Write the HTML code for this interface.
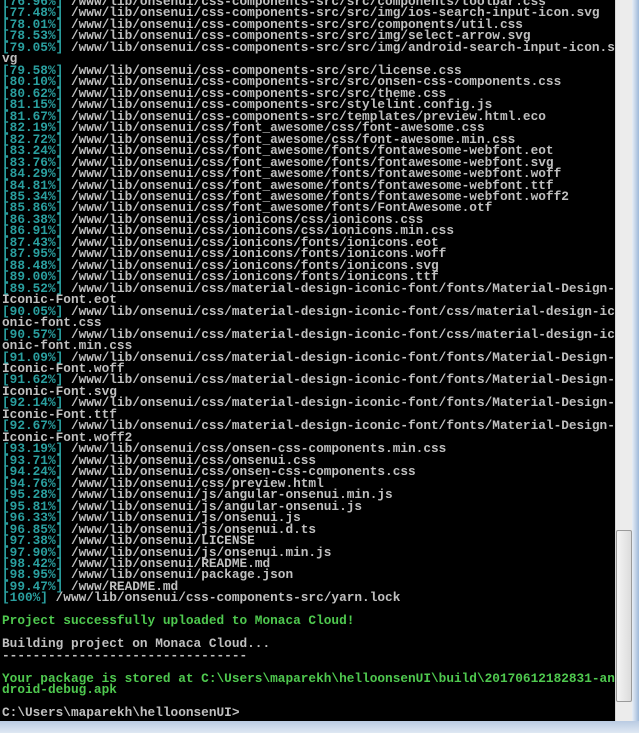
<!DOCTYPE html>
<html><head><meta charset="utf-8"><style>
html,body{margin:0;padding:0;width:639px;height:733px;overflow:hidden;background:#c9d7e8;}
#con{position:absolute;left:0;top:0;width:615px;height:721px;background:#000;overflow:hidden;}
pre{position:absolute;left:2px;top:-4px;margin:0;font-family:"Liberation Mono",monospace;font-size:12.78px;line-height:11.47px;color:#c0c0c0;font-weight:bold;white-space:pre;}
.c{color:#2a9f9f}.g{color:#4fc94f}
#sb{position:absolute;left:615px;top:0;width:17px;height:721px;background:#ececec;border-left:1px solid #d8d8d8;}
#th{position:absolute;left:616px;top:530px;width:14px;height:170px;background:linear-gradient(90deg,#f4f4f4,#dcdcdc);border:1px solid #9a9a9a;border-radius:2px;}
#fr{position:absolute;left:632px;top:0;width:7px;height:733px;background:linear-gradient(90deg,#e8eef6,#9fb9d9);}
#bt{position:absolute;left:0;top:721px;width:639px;height:12px;background:linear-gradient(#b9cbe2,#dfe8f3);}
</style></head><body>
<div id="con"><pre><span class="c">[76.96%]</span> /www/lib/onsenui/css-components-src/src/components/toolbar.css
<span class="c">[77.48%]</span> /www/lib/onsenui/css-components-src/src/img/ios-search-input-icon.svg
<span class="c">[78.01%]</span> /www/lib/onsenui/css-components-src/src/components/util.css
<span class="c">[78.53%]</span> /www/lib/onsenui/css-components-src/src/img/select-arrow.svg
<span class="c">[79.05%]</span> /www/lib/onsenui/css-components-src/src/img/android-search-input-icon.s
vg
<span class="c">[79.58%]</span> /www/lib/onsenui/css-components-src/src/license.css
<span class="c">[80.10%]</span> /www/lib/onsenui/css-components-src/src/onsen-css-components.css
<span class="c">[80.62%]</span> /www/lib/onsenui/css-components-src/src/theme.css
<span class="c">[81.15%]</span> /www/lib/onsenui/css-components-src/stylelint.config.js
<span class="c">[81.67%]</span> /www/lib/onsenui/css-components-src/templates/preview.html.eco
<span class="c">[82.19%]</span> /www/lib/onsenui/css/font_awesome/css/font-awesome.css
<span class="c">[82.72%]</span> /www/lib/onsenui/css/font_awesome/css/font-awesome.min.css
<span class="c">[83.24%]</span> /www/lib/onsenui/css/font_awesome/fonts/fontawesome-webfont.eot
<span class="c">[83.76%]</span> /www/lib/onsenui/css/font_awesome/fonts/fontawesome-webfont.svg
<span class="c">[84.29%]</span> /www/lib/onsenui/css/font_awesome/fonts/fontawesome-webfont.woff
<span class="c">[84.81%]</span> /www/lib/onsenui/css/font_awesome/fonts/fontawesome-webfont.ttf
<span class="c">[85.34%]</span> /www/lib/onsenui/css/font_awesome/fonts/fontawesome-webfont.woff2
<span class="c">[85.86%]</span> /www/lib/onsenui/css/font_awesome/fonts/FontAwesome.otf
<span class="c">[86.38%]</span> /www/lib/onsenui/css/ionicons/css/ionicons.css
<span class="c">[86.91%]</span> /www/lib/onsenui/css/ionicons/css/ionicons.min.css
<span class="c">[87.43%]</span> /www/lib/onsenui/css/ionicons/fonts/ionicons.eot
<span class="c">[87.95%]</span> /www/lib/onsenui/css/ionicons/fonts/ionicons.woff
<span class="c">[88.48%]</span> /www/lib/onsenui/css/ionicons/fonts/ionicons.svg
<span class="c">[89.00%]</span> /www/lib/onsenui/css/ionicons/fonts/ionicons.ttf
<span class="c">[89.52%]</span> /www/lib/onsenui/css/material-design-iconic-font/fonts/Material-Design-
Iconic-Font.eot
<span class="c">[90.05%]</span> /www/lib/onsenui/css/material-design-iconic-font/css/material-design-ic
onic-font.css
<span class="c">[90.57%]</span> /www/lib/onsenui/css/material-design-iconic-font/css/material-design-ic
onic-font.min.css
<span class="c">[91.09%]</span> /www/lib/onsenui/css/material-design-iconic-font/fonts/Material-Design-
Iconic-Font.woff
<span class="c">[91.62%]</span> /www/lib/onsenui/css/material-design-iconic-font/fonts/Material-Design-
Iconic-Font.svg
<span class="c">[92.14%]</span> /www/lib/onsenui/css/material-design-iconic-font/fonts/Material-Design-
Iconic-Font.ttf
<span class="c">[92.67%]</span> /www/lib/onsenui/css/material-design-iconic-font/fonts/Material-Design-
Iconic-Font.woff2
<span class="c">[93.19%]</span> /www/lib/onsenui/css/onsen-css-components.min.css
<span class="c">[93.71%]</span> /www/lib/onsenui/css/onsenui.css
<span class="c">[94.24%]</span> /www/lib/onsenui/css/onsen-css-components.css
<span class="c">[94.76%]</span> /www/lib/onsenui/css/preview.html
<span class="c">[95.28%]</span> /www/lib/onsenui/js/angular-onsenui.min.js
<span class="c">[95.81%]</span> /www/lib/onsenui/js/angular-onsenui.js
<span class="c">[96.33%]</span> /www/lib/onsenui/js/onsenui.js
<span class="c">[96.85%]</span> /www/lib/onsenui/js/onsenui.d.ts
<span class="c">[97.38%]</span> /www/lib/onsenui/LICENSE
<span class="c">[97.90%]</span> /www/lib/onsenui/js/onsenui.min.js
<span class="c">[98.42%]</span> /www/lib/onsenui/README.md
<span class="c">[98.95%]</span> /www/lib/onsenui/package.json
<span class="c">[99.47%]</span> /www/README.md
<span class="c">[100%]</span> /www/lib/onsenui/css-components-src/yarn.lock

<span class="g">Project successfully uploaded to Monaca Cloud!</span>

Building project on Monaca Cloud...
--------------------------------

<span class="g">Your package is stored at C:\Users\maparekh\helloonsenUI\build\20170612182831-an
droid-debug.apk</span>

C:\Users\maparekh\helloonsenUI&gt;</pre></div>
<div id="sb"></div>
<div id="th"></div>
<div id="fr"></div>
<div id="bt"></div>
</body></html>
